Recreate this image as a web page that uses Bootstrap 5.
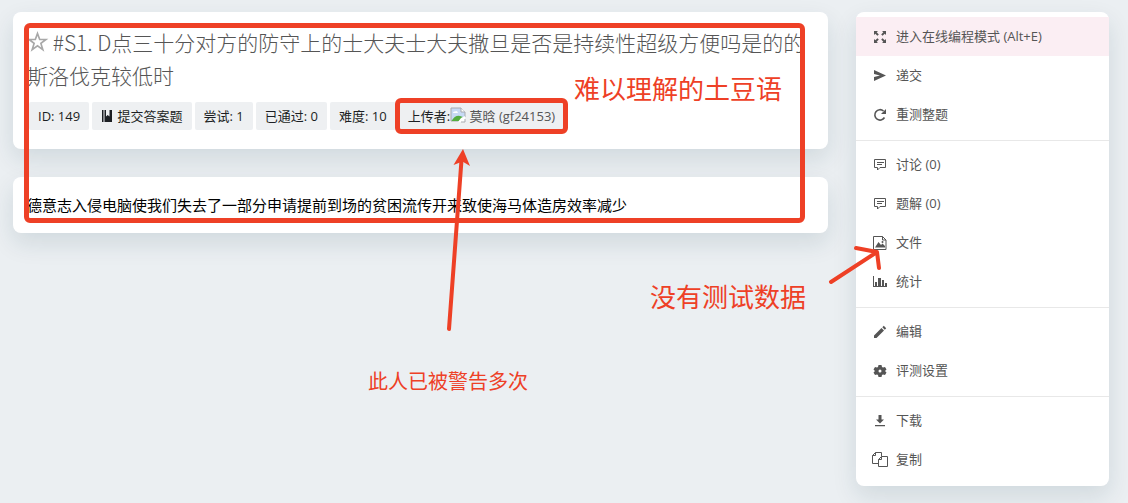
<!DOCTYPE html>
<html lang="zh-CN">
<head>
<meta charset="utf-8">
<meta name="viewport" content="width=device-width, initial-scale=1">
<title>#S1 - 题目</title>
<link href="https://cdn.jsdelivr.net/npm/bootstrap@5.3.0/dist/css/bootstrap.min.css" rel="stylesheet">
<style>
  body { background: #ebeff2; font-family: "Open Sans", "Noto Sans CJK SC", sans-serif; font-size: 13px; color: #1c1f24; }
  a { color: #555; text-decoration: none; }
  .page { gap: 28px; padding: 12px 19px 17px 13px; }
  .main-col { gap: 28px; }
  .side-col { width: 253px; }
  .panel { background: #fff; border-radius: 8px; box-shadow: 0 10px 25px rgba(20, 60, 75, .12); }
  .panel-head { padding: 14px 14px 19px; }
  .panel-body { padding: 16px 14px; font-size: 15px; line-height: 24px; color: #000; }
  .problem-title { font-family: "Noto Sans CJK SC", sans-serif; font-size: 21px; line-height: 33px; font-weight: 300; color: #555; }
  .star { width: 21px; height: 21px; color: #a8a8a8; }
  .tag-list { gap: 3px; padding-left: 2px; margin-top: 10px; }
  .tag-item { background: #eef0f2; border-radius: 2px; line-height: 28px; height: 28px; padding: 0 9px; white-space: nowrap; }
  .menu-panel { padding: 1px 0; }
  .menu-group { padding: 4px 0 6px; }
  .menu-group + .menu-group { border-top: 1px solid #e8e8e8; }
  .menu-link { height: 39px; padding-left: 16px; gap: 8px; }
  .menu-link.current { background: #fbeef3; }
  .menu-link svg { width: 16px; height: 16px; flex: none; }
  .note-frame { position: absolute; border: 5px solid #ee4026; border-radius: 6px; pointer-events: none; z-index: 2; }
  .frame-all { left: 11px; right: 23px; top: 11px; bottom: 10px; }
  .frame-user { inset: -4px; }
  .note { position: absolute; color: #ee4026; white-space: nowrap; z-index: 2; font-size: 26px; line-height: 32px; }
  .note-small { font-size: 20px; }
  .note-a { left: 561px; top: 61px; }
  .note-b { left: 637px; top: 269px; }
  .note-c { left: 355px; top: 354px; }
  .arrow { position: absolute; overflow: visible; color: #ee4026; z-index: 3; pointer-events: none; }
  .arrow-user { left: 430px; top: 136px; }
  .arrow-file { left: -28px; top: 233px; }
</style>
</head>
<body>
<div class="page d-flex align-items-start">
  <main class="main-col d-flex flex-column flex-grow-1 position-relative">
    <section class="panel panel-head">
      <h1 class="problem-title mb-0"><button type="button" class="btn p-0 border-0 star align-baseline lh-1 d-inline-flex" aria-label="收藏"><svg width="21" height="21" viewBox="0 -1 21 21" overflow="visible" fill="none" stroke="currentColor" stroke-width="1.7"><path d="M10.500 2.500l2.200 6h6.200l-5 3.900 1.900 6.200-5.300-3.700-5.300 3.700 1.900-6.200-5-3.900h6.200z"/></svg></button> #S1. D点三十分对方的防守上的士大夫士大夫撒旦是否是持续性超级方便吗是的的斯洛伐克较低时</h1>
      <div class="tag-list d-flex flex-wrap">
        <span class="tag-item">ID: 149</span>
        <span class="tag-item"><svg width="13" height="13" viewBox="0 0 13 13" overflow="visible" fill="currentColor" aria-hidden="true"><path d="M1 -1h1.500v12H1zM3.500 -1H5v6.500l1.700-1.500L8.500 5.500V-1H11v12H3.500z"/></svg> 提交答案题</span>
        <span class="tag-item">尝试: 1</span>
        <span class="tag-item">已通过: 0</span>
        <span class="tag-item">难度: 10</span>
        <span class="tag-item position-relative">上传者:<svg class="align-text-top" width="16" height="16" viewBox="0 0 16 16" aria-hidden="true"><path d="M1 1h10l4 4v5l-3 1-2 3H1z" fill="#c7daf5" stroke="#a7aaae"/><path d="M11 1v4h4" fill="#fff" stroke="#a7aaae"/><path d="M3 6q0-2 2-1.500Q7 3 8 6z" fill="#fff"/><path d="M1.500 14Q5 8 10 9l3 1-4 4z" fill="#54ad40"/><path d="M8 15l3-4 4-2v6z" fill="#fff"/><path d="M11 15h4v-3" fill="none" stroke="#a7aaae"/></svg> <a href="#">莫晗 (gf24153)</a><span class="note-frame frame-user"></span></span>
      </div>
    </section>
    <section class="panel panel-body"><p class="mb-0">德意志入侵电脑使我们失去了一部分申请提前到场的贫困流传开来致使海马体造房效率减少</p></section>
    <div class="note-frame frame-all"></div>
    <div class="note note-a">难以理解的土豆语</div>
    <div class="note note-b">没有测试数据</div>
    <div class="note note-small note-c">此人已被警告多次</div>
    <svg class="arrow arrow-user" width="40" height="185" viewBox="0 0 40 185" aria-hidden="true"><path d="M6 181L18.500 12" fill="none" stroke="currentColor" stroke-width="4" stroke-linecap="round"/><path d="M20 1l7 17-7.500-4.500L10.500 17z" fill="currentColor"/></svg>
  </main>

  <aside class="side-col flex-shrink-0 position-relative">
    <nav class="panel menu-panel" aria-label="题目菜单">
      <div class="menu-group d-flex flex-column">
        <a href="#" class="menu-link current d-flex align-items-center"><svg viewBox="0 0 16 16" fill="currentColor"><path d="M2 2h4L4.700 3.300l2.100 2.100-1.400 1.400-2.100-2.100L2 6zM14 2v4l-1.300-1.300-2.100 2.100-1.400-1.400 2.100-2.100L10 2zM2 14v-4l1.300 1.300 2.100-2.100 1.400 1.400-2.100 2.100L6 14zM14 14h-4l1.300-1.300-2.100-2.100 1.400-1.400 2.100 2.100L14 10z"/></svg>进入在线编程模式 (Alt+E)</a>
        <a href="#" class="menu-link d-flex align-items-center"><svg viewBox="0 0 16 16" fill="currentColor"><path d="M2 2l12 5.500L2 13V9l6-1.500L2 6z"/></svg>递交</a>
        <a href="#" class="menu-link d-flex align-items-center"><svg viewBox="0 0 16 16" fill="none" stroke="currentColor" stroke-width="1.600"><path d="M12.500 10.500A5.200 5.200 0 1 1 11.500 4"/><path d="M14 2v5H9z" fill="currentColor" stroke="none"/></svg>重测整题</a>
      </div>
      <div class="menu-group d-flex flex-column">
        <a href="#" class="menu-link d-flex align-items-center"><svg viewBox="0 0 16 16" fill="none" stroke="currentColor"><path d="M2.500 2.500h11v8H8L5.500 13v-2.500h-3zM5 5.500h7M5 7.500h5"/></svg>讨论 (0)</a>
        <a href="#" class="menu-link d-flex align-items-center"><svg viewBox="0 0 16 16" fill="none" stroke="currentColor"><path d="M2.500 2.500h11v8H8L5.500 13v-2.500h-3zM5 5.500h7M5 7.500h5"/></svg>题解 (0)</a>
        <a href="#" class="menu-link d-flex align-items-center"><svg viewBox="0 0 16 16" fill="none" stroke="currentColor"><path d="M1.500 1.500h9l3.500 3.500v9.500H1.500zM10.500 1.500V5H14"/><path d="M3 12.500L6.500 7 9 10l1.500-1.500L13 11v1.500z" fill="currentColor" stroke="none"/><circle cx="10.500" cy="7" r="1" fill="currentColor" stroke="none"/></svg>文件</a>
        <a href="#" class="menu-link d-flex align-items-center"><svg viewBox="0 0 16 16" fill="currentColor"><path d="M1 2h1v10h13v1H1zM3 8h2v4H3zM6 4h3v8H6zM10 6h2v6h-2zM13 9h2v3h-2z"/></svg>统计</a>
      </div>
      <div class="menu-group d-flex flex-column">
        <a href="#" class="menu-link d-flex align-items-center"><svg viewBox="0 0 16 16" fill="currentColor"><path d="M2 11.500l7.500-7.500L12 6.500 4.500 14H2zM10.300 3.200L11.800 1.800 14.200 4.200 12.800 5.700z"/></svg>编辑</a>
        <a href="#" class="menu-link d-flex align-items-center"><svg viewBox="0 0 16 16" fill="currentColor" fill-rule="evenodd"><path d="M6.500 2h3l.5 2 1 .5 2-.5 1.500 2.500L13 8l1.500 1.500L13 12l-2-.5-1 .5-.5 2h-3L6 12l-1-.5-2 .5-1.500-2.500L3 8 1.500 6.500 3 4l2 .5 1-.5zM8 6.500a1.500 1.500 0 1 0 0 3 1.500 1.500 0 0 0 0-3z"/></svg>评测设置</a>
      </div>
      <div class="menu-group d-flex flex-column">
        <a href="#" class="menu-link d-flex align-items-center"><svg viewBox="0 0 16 16" fill="currentColor"><path d="M6.500 2h3v4.500H12L8 10.500 4 6.500h2.500zM3 12h10v1.200H3z"/></svg>下载</a>
        <a href="#" class="menu-link d-flex align-items-center"><svg viewBox="0 0 16 16" fill="none" stroke="currentColor"><path d="M6.500 11.500h-6v-8l3-3h6V4M3.500.500v3h-3M9.500 4.500h6v10h-9v-7zM9.500 4.500v3h-3"/></svg>复制</a>
      </div>
    </nav>
    <svg class="arrow arrow-file" width="56" height="40" viewBox="0 0 56 40" fill="none" stroke="currentColor" stroke-width="4" stroke-linecap="round" stroke-linejoin="round" aria-hidden="true"><path d="M3 37L49 7M28 3l21 4 2 16"/></svg>
  </aside>
</div>
<script src="https://cdn.jsdelivr.net/npm/bootstrap@5.3.0/dist/js/bootstrap.bundle.min.js"></script>
</body>
</html>
